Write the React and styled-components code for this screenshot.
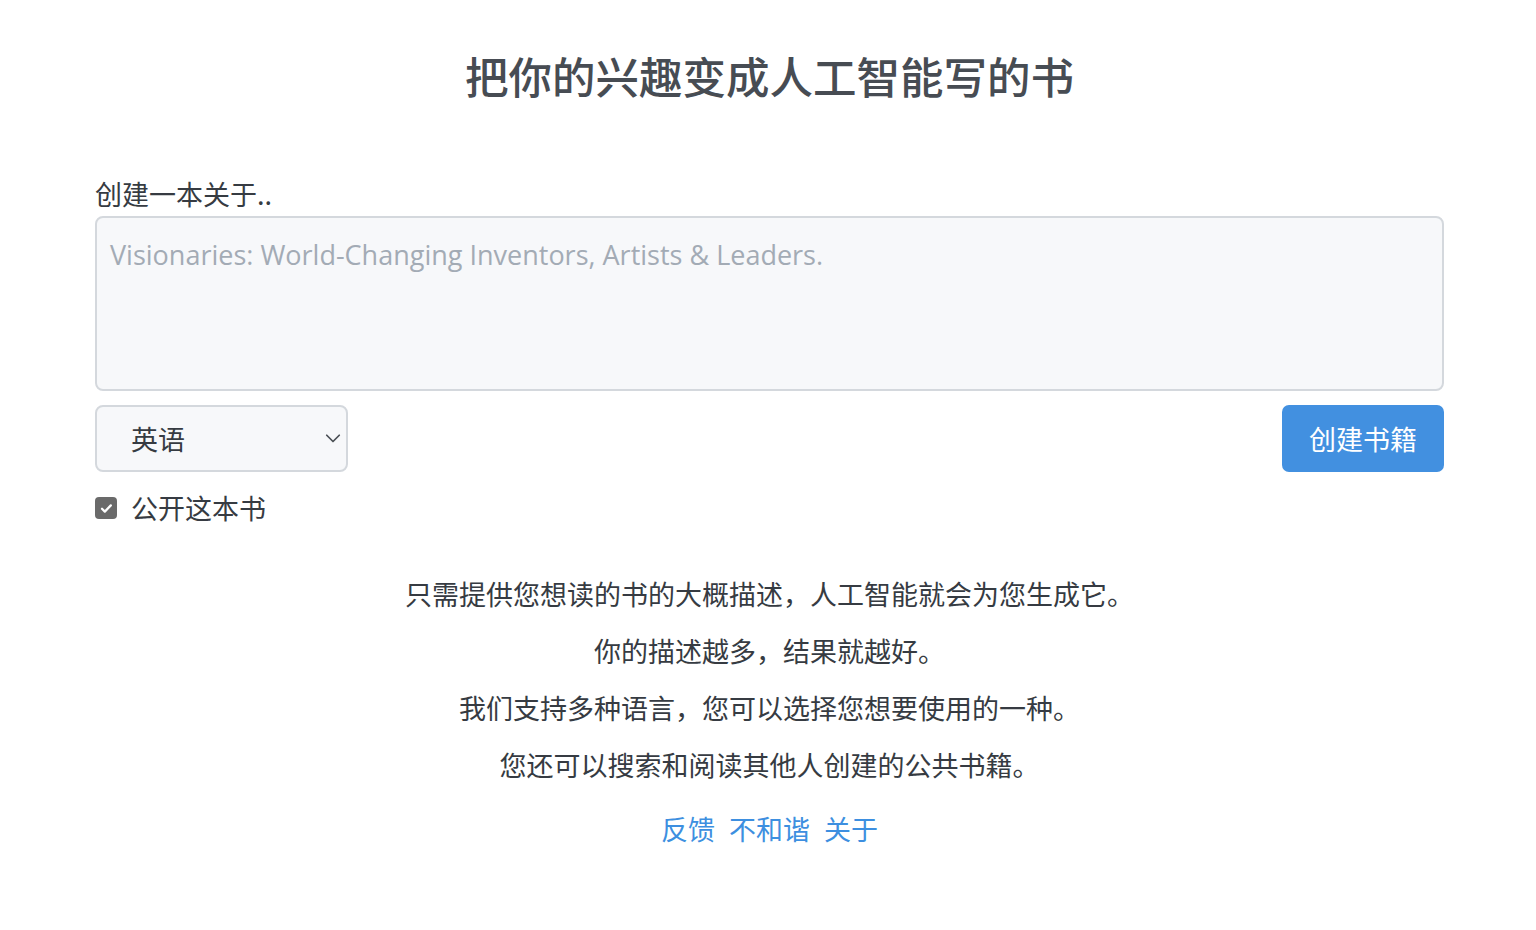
import React from 'react';
import styled, { createGlobalStyle } from 'styled-components';

const GlobalStyle = createGlobalStyle`
    body {
        margin: 0;
        background: #ffffff;
        font-family: "Open Sans", "Noto Sans CJK SC", sans-serif;
        color: #333840;
    }
`;

export default function App() {
    return (
        <Page>
            <GlobalStyle />
            <Title>把你的兴趣变成人工智能写的书</Title>

            <Form>
                <Label htmlFor="topic">创建一本关于..</Label>
                <TextArea id="topic" placeholder="Visionaries: World-Changing Inventors, Artists & Leaders." />

                <Controls>
                    <SelectWrap>
                        <Select defaultValue="en">
                            <option value="en">英语</option>
                            <option value="zh">中文</option>
                        </Select>
                        <Chevron viewBox="0 0 16 16">
                            <path d="M3 5.8l5 5 5-5" fill="none" stroke="#4a4f55" strokeWidth="1.4" strokeLinecap="round" strokeLinejoin="round" />
                        </Chevron>
                    </SelectWrap>
                    <CreateButton>创建书籍</CreateButton>
                </Controls>

                <CheckRow>
                    <CheckBox>
                        <svg viewBox="0 0 16 16" width="15" height="15">
                            <path d="M3.2 8.3l3 3 6.4-6.6" fill="none" stroke="#fff" strokeWidth="2.4" strokeLinecap="round" strokeLinejoin="round" />
                        </svg>
                    </CheckBox>
                    <CheckLabel>公开这本书</CheckLabel>
                </CheckRow>
            </Form>

            <Info>
                <InfoLine>只需提供您想读的书的大概描述，人工智能就会为您生成它。</InfoLine>
                <InfoLine>你的描述越多，结果就越好。</InfoLine>
                <InfoLine>我们支持多种语言，您可以选择您想要使用的一种。</InfoLine>
                <InfoLine>您还可以搜索和阅读其他人创建的公共书籍。</InfoLine>
            </Info>

            <Links>
                <FooterLink href="#">反馈</FooterLink>
                <FooterLink href="#">不和谐</FooterLink>
                <FooterLink href="#">关于</FooterLink>
            </Links>
        </Page>
    );
}

const Page = styled.div`
    box-sizing: border-box;
    width: 100%;
    padding: 48px 92px 0 95px;
    display: flex;
    flex-direction: column;
`;

const Title = styled.h1`
    margin: 0;
    text-align: center;
    font-family: "Noto Sans CJK SC", sans-serif;
    font-weight: 500;
    font-size: 43.5px;
    line-height: 56px;
    color: #474c53;
`;

const Form = styled.div`
    margin-top: 72px;
    display: flex;
    flex-direction: column;
`;

const Label = styled.label`
    font-family: "Noto Sans CJK SC", sans-serif;
    font-size: 27px;
    line-height: 36px;
    color: #363b42;
    margin-bottom: 4px;
`;

const TextArea = styled.textarea`
    box-sizing: border-box;
    width: 100%;
    height: 175px;
    resize: none;
    border: 2px solid #d4d8dd;
    border-radius: 8px;
    background: #f7f8fa;
    padding: 18px 13px;
    font-family: "Open Sans", sans-serif;
    font-size: 27px;
    line-height: 38px;
    color: #333;
    outline: none;

    &::placeholder {
        color: #a3abb5;
    }
`;

const Controls = styled.div`
    margin-top: 14px;
    display: flex;
    justify-content: space-between;
    align-items: center;
`;

const SelectWrap = styled.div`
    position: relative;
    width: 253px;
    height: 67px;
`;

const Select = styled.select`
    appearance: none;
    box-sizing: border-box;
    width: 100%;
    height: 100%;
    border: 2px solid #d4d8dd;
    border-radius: 8px;
    background: #f7f8fa;
    padding: 0 34px;
    font-family: "Noto Sans CJK SC", sans-serif;
    font-size: 27px;
    color: #363b42;
    outline: none;
`;

const Chevron = styled.svg`
    position: absolute;
    right: 5px;
    top: 23px;
    width: 20px;
    height: 20px;
    pointer-events: none;
`;

const CreateButton = styled.button`
    width: 162px;
    height: 67px;
    border: none;
    border-radius: 7px;
    background: #4290e0;
    color: #fff;
    font-family: "Noto Sans CJK SC", sans-serif;
    font-size: 27px;
    cursor: pointer;
`;

const CheckRow = styled.div`
    margin-top: 18px;
    display: flex;
    align-items: center;
    gap: 14px;
`;

const CheckBox = styled.span`
    width: 22px;
    height: 22px;
    border-radius: 4px;
    background: #6a6a6a;
    display: flex;
    align-items: center;
    justify-content: center;
`;

const CheckLabel = styled.span`
    font-family: "Noto Sans CJK SC", sans-serif;
    font-size: 27px;
    line-height: 36px;
    color: #363b42;
`;

const Info = styled.div`
    margin-top: 50px;
    display: flex;
    flex-direction: column;
    align-items: center;
    gap: 21px;
`;

const InfoLine = styled.p`
    margin: 0;
    font-family: "Noto Sans CJK SC", sans-serif;
    font-size: 27px;
    line-height: 36px;
    color: #363b42;
`;

const Links = styled.div`
    margin-top: 28px;
    display: flex;
    justify-content: center;
    gap: 14px;
`;

const FooterLink = styled.a`
    font-family: "Noto Sans CJK SC", sans-serif;
    font-size: 27px;
    line-height: 36px;
    color: #3d8fe0;
    text-decoration: none;

    &:hover {
        text-decoration: underline;
    }
`;
